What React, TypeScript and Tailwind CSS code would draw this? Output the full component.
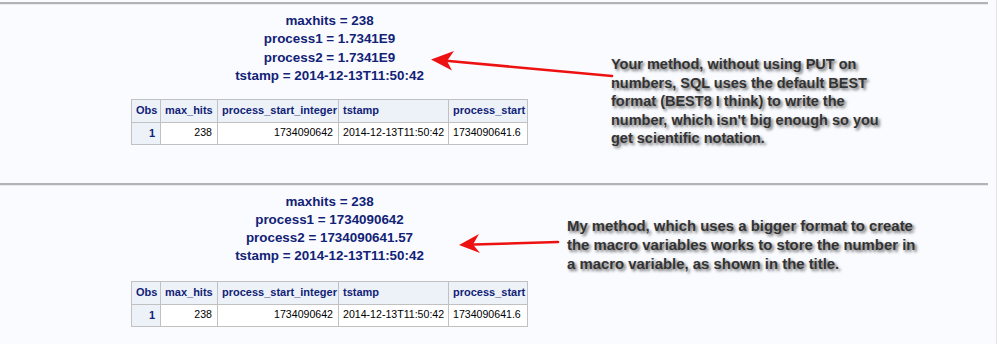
import React from "react";

const font = "font-['Liberation_Sans',Arial,sans-serif]";

const cols = [
  { name: "Obs", w: "w-[29px]" },
  { name: "max_hits", w: "w-[57px]" },
  { name: "process_start_integer", w: "w-[121px]" },
  { name: "tstamp", w: "w-[110px]" },
  { name: "process_start", w: "w-[79px]" },
];

function SasTable() {
  return (
    <table className="table-fixed border-collapse w-[396px]">
      <colgroup>
        {cols.map((c) => (
          <col key={c.name} className={c.w} />
        ))}
      </colgroup>
      <thead>
        <tr className="h-[23px]">
          {cols.map((c) => (
            <th
              key={c.name}
              className="border border-[#c1c1c1] bg-[#edf2f9] text-[#112277] text-[11px] font-bold text-left px-[4px] whitespace-nowrap"
            >
              {c.name}
            </th>
          ))}
        </tr>
      </thead>
      <tbody>
        <tr className="h-[22px] text-[10.6px] text-black">
          <td className="border border-[#c1c1c1] bg-[#edf2f9] text-[#112277] text-[11px] font-bold text-right px-[5px]">1</td>
          <td className="border border-[#c1c1c1] bg-white text-right px-[5px]">238</td>
          <td className="border border-[#c1c1c1] bg-white text-right px-[5px]">1734090642</td>
          <td className="border border-[#c1c1c1] bg-white text-left px-[4px] whitespace-nowrap">2014-12-13T11:50:42</td>
          <td className="border border-[#c1c1c1] bg-white text-left px-[4px] whitespace-nowrap">1734090641.6</td>
        </tr>
      </tbody>
    </table>
  );
}

function Separator() {
  return (
    <div>
      <div className="h-[2px] bg-[#b3b3b3]" />
      <div className="h-px bg-[#eaeaee]" />
    </div>
  );
}

const note = "font-bold text-[#333333] whitespace-nowrap [text-shadow:2px_2px_3px_rgba(0,0,0,0.6)]";

export default function App() {
  return (
    <div className={`relative w-[999px] h-[344px] bg-[#fafbfe] flex overflow-hidden ${font}`}>
      <div className="w-[988px] flex flex-col">
        <div className="h-[2px]" />
        <Separator />

        {/* first run: default BEST format */}
        <div className="flex">
          <div className="w-[611px] pl-[48px] pt-[7px] flex flex-col items-center">
            <div className="text-[#112277] font-bold text-[13.4px] leading-[18.4px] text-center">
              <p>maxhits = 238</p>
              <p>process1 = 1.7341E9</p>
              <p>process2 = 1.7341E9</p>
              <p>tstamp = 2014-12-13T11:50:42</p>
            </div>
            <div className="mt-[13px]">
              <SasTable />
            </div>
          </div>
          <div className={`mt-[50px] text-[14.5px] leading-[18.5px] ${note}`}>
            Your method, without using PUT on
            <br />
            numbers, SQL uses the default BEST
            <br />
            format (BEST8 I think) to write the
            <br />
            number, which isn't big enough so you
            <br />
            get scientific notation.
          </div>
        </div>

        <div className="h-[35px]" />
        <Separator />

        {/* second run: wider format */}
        <div className="flex">
          <div className="w-[567px] pl-[92px] pt-[7px] flex flex-col items-center">
            <div className="text-[#112277] font-bold text-[13.4px] leading-[18px] text-center">
              <p>maxhits = 238</p>
              <p>process1 = 1734090642</p>
              <p>process2 = 1734090641.57</p>
              <p>tstamp = 2014-12-13T11:50:42</p>
            </div>
            <div className="mt-[16px]">
              <SasTable />
            </div>
          </div>
          <div className={`mt-[31px] text-[14.9px] leading-[19px] ${note}`}>
            My method, which uses a bigger format to create
            <br />
            the macro variables works to store the number in
            <br />
            a macro variable, as shown in the title.
          </div>
        </div>
      </div>
      <div className="ml-[8px] w-px bg-[#e4e4e4]" />
      <div className="flex-1 bg-white" />

      {/* red annotation arrows */}
      <svg className="absolute inset-0 pointer-events-none" width="999" height="344" viewBox="0 0 999 344">
        <line x1="446" y1="60.8" x2="612" y2="76" stroke="#ee1111" strokeWidth="2.6" strokeLinecap="round" />
        <polygon points="431,59.5 454,51 447,61 452,70.5" fill="#ee1111" />
        <line x1="474" y1="244.5" x2="558" y2="242" stroke="#ee1111" strokeWidth="2.6" strokeLinecap="round" />
        <polygon points="459,245 479,234 473,244.5 480,253" fill="#ee1111" />
      </svg>
    </div>
  );
}
